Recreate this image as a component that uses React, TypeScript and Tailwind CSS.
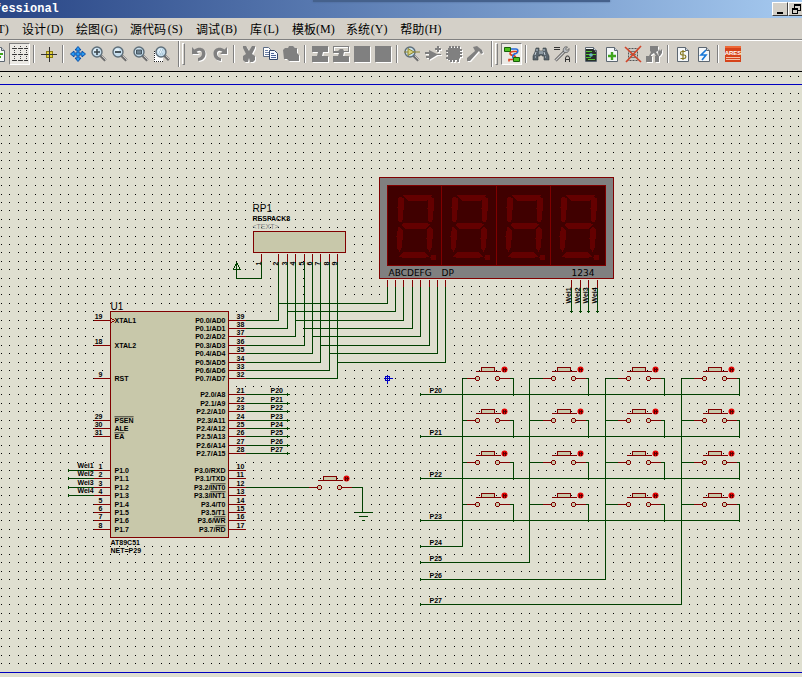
import type { ReactNode } from "react";

const PITCH = 8.4;
const ORIGIN = { x: 387, y: 378 };
const WIRE = "#004000";
const PART = "#800000";
const BODY = "#c8c8aa";

const gridX = (k: number) => ORIGIN.x + Math.trunc(k * PITCH);
const gridY = (k: number) => ORIGIN.y + Math.trunc(k * PITCH);

const menus = [
  { name: "工具", key: "T" },
  { name: "设计", key: "D" },
  { name: "绘图", key: "G" },
  { name: "源代码", key: "S" },
  { name: "调试", key: "B" },
  { name: "库", key: "L" },
  { name: "模板", key: "M" },
  { name: "系统", key: "Y" },
  { name: "帮助", key: "H" },
];

/* ---------- toolbar icons ---------- */

function Icon({ children }: { children: ReactNode }) {
  return (
    <svg viewBox="0 0 16 16" className="h-4 w-4 shrink-0 overflow-visible" aria-hidden="true">
      {children}
    </svg>
  );
}

// disabled Win32 look: white copy shifted by one pixel under the gray one
function Disabled({ children }: { children: ReactNode }) {
  return (
    <Icon>
      <g transform="translate(1 1)" fill="#fff">{children}</g>
      <g fill="#808080">{children}</g>
    </Icon>
  );
}

function Lens({ children, x = 6 }: { children?: ReactNode; x?: number }) {
  return (
    <g>
      <path d={x === 6 ? "M9.5 9.5l5 5" : "M10.5 9.5l4.5 4.5"} stroke="#6c6c6c" strokeWidth="3" />
      <path d={x === 6 ? "M10.5 9.5l4.5 4.5" : "M11.5 9.5l4 4"} stroke="#c8c8c8" strokeWidth="1" />
      <circle cx={x} cy="6" r="5" fill="#c4dcec" stroke="#5d6d78" strokeWidth="1.4" />
      <circle cx={x - 1} cy="5" r="2.5" fill="#e2f0f8" />
      {children}
    </g>
  );
}

function Page({ children }: { children?: ReactNode }) {
  return (
    <g>
      <path d="M2.5 1.5h8l3 3v11h-11z" fill="#f4f7f9" stroke="#5c6670" />
      <path d="M10.5 1.5v3h3" fill="#cfd6dc" stroke="#5c6670" />
      {children}
    </g>
  );
}

const GridIcon = () => (
  <Icon>
    <path
      d="M0 2.5h16M0 8.5h16M0 14.5h16M2.5 0v16M8.500 0v16M14.5 0v16"
      stroke="#444" strokeDasharray="1 1" shapeRendering="crispEdges"
    />
    <path d="M1 2.500h3M7 2.500h3M13 2.500h3M1 8.500h3M7 8.500h3M13 8.500h3M1 14.500h3M7 14.500h3M13 14.500h3" stroke="#333" shapeRendering="crispEdges" />
  </Icon>
);

const OriginIcon = () => (
  <Icon>
    <path d="M0 8.5h16M8.5 1v15" stroke="#333" shapeRendering="crispEdges" />
    <path d="M5 5h7v7H5z" fill="#8b7d10" shapeRendering="crispEdges" />
    <path d="M6 6h2v2H6zM9 6h2v2H9zM6 9h2v2H6zM9 9h2v2H9z" fill="#e0d040" shapeRendering="crispEdges" />
    <path d="M8.500 5v7M5 8.500h7" stroke="#333" shapeRendering="crispEdges" />
  </Icon>
);

const PanIcon = () => (
  <Icon>
    <path
      d="M8 .5l3 3.5H9v3h3V5l3.5 3-3.5 3V9H9v3h2l-3 3.5L5 12h2V9H4v2L.5 8 4 5v2h3V4H5z"
      fill="#2a9af0" stroke="#0b4fa8" strokeWidth="1"
    />
  </Icon>
);

const ZoomInIcon = () => <Icon><Lens><path d="M3 6h6M6 3v6" stroke="#38444c" strokeWidth="1.6" /></Lens></Icon>;
const ZoomOutIcon = () => <Icon><Lens><path d="M3 6h6" stroke="#38444c" strokeWidth="1.8" /></Lens></Icon>;
const ZoomAllIcon = () => <Icon><Lens><path d="M3.5 4h5v4h-5z" fill="#6e8290" stroke="#44545e" /></Lens></Icon>;
const ZoomAreaIcon = () => (
  <Icon>
    <path d="M0 6h9v10H0z" fill="#fff" />
    <path d="M.5 5v10.5h9" fill="none" stroke="#222" strokeDasharray="1 1" shapeRendering="crispEdges" />
    <Lens x={7}><path d="M6 4h3M5 6h4M6 8h3" stroke="#8fb4c8" strokeDasharray="1 1" /></Lens>
  </Icon>
);

const UndoIcon = () => (
  <Disabled><path d="M1 1v7h7L5.600 5.800C8 4 11 4.300 11 7.500c0 2.600-1.600 3.900-4 4.500v3c4.500-.3 7.500-3 7.500-7.500C14.500 2 8 0 3.500 3.600z" /></Disabled>
);
const RedoIcon = () => (
  <Disabled><path d="M15 1v7H8l2.400-2.200C8 4 5 4.300 5 7.500c0 2.600 1.600 3.900 4 4.500v3C4.500 14.700 1.500 12 1.500 7.500 1.500 2 8 0 12.500 3.600z" /></Disabled>
);
const CutIcon = () => (
  <Disabled>
    <path d="M2 0h3l3 5 3-5h3v2l-3 6 3 2v4l-2 2h-3l-1-4-1 4H4l-2-2v-4l3-2-3-6z" />
  </Disabled>
);
const CopyIcon = () => (
  <Icon>
    <path d="M1.500 1.500h5l2 2v7h-7z" fill="#fff" stroke="#5b6b84" />
    <path d="M3 4.500h3M3 6.500h4M3 8.500h4" stroke="#6a7fa6" />
    <path d="M7.500 4.500h5l3 3v6h-8z" fill="#f4f8ff" stroke="#33466a" />
    <path d="M9 7.500h3M9 9.500h5M9 11.500h5" stroke="#4a6296" />
  </Icon>
);
const PasteIcon = () => (
  <Disabled><path d="M0 4l2-2h3l1-2h4l2 2h2v5l2 2v6H6l-2-2H1z" /></Disabled>
);
const BlockCopyIcon = () => (
  <Disabled><path d="M0 0h16v6h-5l-1 4h6v6H0v-6h5l1-4H0z" /></Disabled>
);
const BlockMoveIcon = () => (
  <Disabled><path d="M0 0h16v6h-5l-1 4h6v6H0v-6h5l1-3H0zM1 1v4h4l2-2h3l1 2h4V1z" fillRule="evenodd" /></Disabled>
);
const SquareIcon = () => <Disabled><path d="M0 0h16v16H0z" /></Disabled>;

const PickIcon = () => (
  <Icon>
    <Lens><path d="M4 2.500L10 6 4 9.500z" fill="#d8d27a" stroke="#8c8430" /></Lens>
    <path d="M0 6h4M10 6h6" stroke="#8c8430" />
  </Icon>
);
const MakeIcon = () => (
  <Disabled>
    <path d="M4 4l9 4.500-9 5.500v-2H1v-2h3V8H0V6h4zM12 0h2v2h2v2h-2v2h-2V4h-2V2h2zM12 8h4v1h-4z" />
  </Disabled>
);
const PackageIcon = () => (
  <Disabled>
    <path d="M2 2h1V0h2v2h1V0h2v2h1V0h2v2h1V0h2v3h2v2h-2v1h2v2h-2v1h2v2h-2v1l-1 1v3h-2v-2H9v2H7v-2H6v2H4v-2H2v-1H0v-2h2V9H0V7h2V6H0V4h2z" />
  </Disabled>
);
const HammerIcon = () => (
  <Disabled><path d="M6 1l4-1 5 4 1 3-2 1-2-3-1 1-8 9H0v-3l8-7z" /></Disabled>
);

const RouteIcon = () => (
  <Icon>
    <path d="M13 7V5.500H9.500C5 5.500 5 9 9 9.500c4 .5 3 4 0 4H5v2" fill="none" stroke="#e0401c" strokeWidth="1.600" />
    <path d="M7 3h5c2.500 0 2.500 4 0 4.500C8 8 8 12 10 13" fill="none" stroke="#2468d8" strokeWidth="1.500" />
    <path d="M.5 1.500h6v4h-6z" fill="#4fc020" stroke="#186008" />
    <path d="M9.500 11.500h6v4h-6z" fill="#4fc020" stroke="#186008" />
  </Icon>
);
const FindIcon = () => (
  <Icon>
    <path d="M3 2h3v3h4V2h3l1 4 2 4v4h-5v-4H9v-1H7v1H5v4H0v-4l2-4z" fill="#59646c" stroke="#333c42" strokeWidth=".6" />
    <path d="M2 9l1-3M12 9l-1-3M2 11h1M12 11h1M4 3v2M11 3v2" stroke="#c4d0d8" />
    <path d="M7 5v3M9 5v3" stroke="#c4d0d8" />
  </Icon>
);
const PropertyIcon = () => (
  <Icon>
    <path d="M0 1.500h6M0 3.500h6" stroke="#333" shapeRendering="crispEdges" />
    <path d="M1.500 14.500l9-9" stroke="#555" strokeWidth="3" />
    <path d="M1.500 14.500l9-9" stroke="#d0d0d0" strokeWidth="1.200" />
    <path d="M15 2.500l-2 2-1.500-1.500 2-2c-3-1-5 1.500-4 5 3 1.500 6 0 5.500-3.500z" fill="#b8bcc0" stroke="#555" strokeWidth=".8" />
    <path d="M11.500 16v-4l1-2h2l1 2v4M11.500 13.500h4" fill="none" stroke="#333" />
  </Icon>
);
const NetlistIcon = () => (
  <Icon>
    <Page>
      <path d="M3 3h7l3 3v9H3z" fill="#27302c" />
      <path d="M3 5.500h6M3 8.500h4M9 8.500h4M3 11.500h5M5 13.500h7" stroke="#55c832" />
      <circle cx="8" cy="9" r="1.800" fill="#6cb8c8" />
    </Page>
  </Icon>
);
const NewSheetIcon = () => (
  <Icon><Page><path d="M8 6v8M4 10h8" stroke="#3fa51e" strokeWidth="2.400" /></Page></Icon>
);
const RemoveSheetIcon = () => (
  <Icon>
    <path d="M3.500 2.500h9v12h-9z" fill="#c9c9c4" stroke="#555" strokeDasharray="2 1" />
    <path d="M5 5.500h6M5 8.500h6M5 11.500h6" stroke="#777" />
    <path d="M0 1l16 15M16 0L1 16" stroke="#d2452a" strokeWidth="1.700" />
  </Icon>
);
const ZoomSheetIcon = () => (
  <Disabled>
    <path d="M4 0h8v5l-2 1 2 3 1 1v6H9v-6h1L8 7 5 9v1h1v6H0v-6h3l2-4-1-1zM13 3l1 2 2-2v4l-2 3h-1l-1-4z" />
  </Disabled>
);
const BillIcon = () => (
  <Icon>
    <Page />
    <path d="M10.500 5.500H7C5 5.500 5 9 7 9h2c2.500 0 2.500 3.500 0 3.500H5.500M8 4v10" fill="none" stroke="#857820" strokeWidth="1.200" />
  </Icon>
);
const ErcIcon = () => (
  <Icon><Page><path d="M10 4L5 9h5l-4 5" fill="none" stroke="#1577d8" strokeWidth="1.600" /></Page></Icon>
);
const AresIcon = () => (
  <Icon>
    <path d="M0 0h16v16H0z" fill="#d6431a" />
    <path d="M0 0h16v2H0z" fill="#ee6a38" />
    <text x="8" y="9" textAnchor="middle" fontSize="6" fontWeight="700" fill="#fff" fontFamily="'Liberation Sans', sans-serif">ARES</text>
    <path d="M1 11.500h14M1 13.500h14" stroke="#f5c0a8" shapeRendering="crispEdges" />
  </Icon>
);

type Tool = { label: string; icon?: ReactNode; pressed?: boolean };

const groups: { wide?: boolean; tools: Tool[] }[] = [
  {
    tools: [
      { label: "刷新", icon: <Icon><Page><path d="M5 8h7M5 11h5" stroke="#3fa51e" strokeWidth="2" /></Page></Icon> },
      { label: "网格", icon: <GridIcon />, pressed: true },
    ],
  },
  { tools: [{ label: "原点", icon: <OriginIcon /> }] },
  {
    tools: [
      { label: "平移", icon: <PanIcon /> },
      { label: "放大", icon: <ZoomInIcon /> },
      { label: "缩小", icon: <ZoomOutIcon /> },
      { label: "显示全部", icon: <ZoomAllIcon /> },
      { label: "区域缩放", icon: <ZoomAreaIcon /> },
    ],
  },
  { wide: true, tools: [{ label: "撤销", icon: <UndoIcon /> }, { label: "重做", icon: <RedoIcon /> }] },
  {
    tools: [
      { label: "剪切", icon: <CutIcon /> },
      { label: "复制", icon: <CopyIcon /> },
      { label: "粘贴", icon: <PasteIcon /> },
    ],
  },
  {
    tools: [
      { label: "块复制", icon: <BlockCopyIcon /> },
      { label: "块移动", icon: <BlockMoveIcon /> },
      { label: "块旋转", icon: <SquareIcon /> },
      { label: "块删除", icon: <SquareIcon /> },
    ],
  },
  {
    tools: [
      { label: "拾取元件", icon: <PickIcon /> },
      { label: "制作元件", icon: <MakeIcon /> },
      { label: "封装工具", icon: <PackageIcon /> },
      { label: "分解", icon: <HammerIcon /> },
    ],
  },
  { wide: true, tools: [{ label: "自动连线", icon: <RouteIcon />, pressed: true }] },
  { tools: [{ label: "查找", icon: <FindIcon /> }, { label: "属性分配", icon: <PropertyIcon /> }] },
  {
    tools: [
      { label: "设计浏览器", icon: <NetlistIcon /> },
      { label: "新建图纸", icon: <NewSheetIcon /> },
      { label: "删除图纸", icon: <RemoveSheetIcon /> },
      { label: "转到图纸", icon: <ZoomSheetIcon /> },
    ],
  },
  { tools: [{ label: "元件清单", icon: <BillIcon /> }, { label: "电气检查", icon: <ErcIcon /> }] },
  { tools: [{ label: "ARES", icon: <AresIcon /> }] },
];

function Separator({ wide }: { wide?: boolean }) {
  if (wide) {
    return (
      <div className="flex h-full w-4 shrink-0 items-center pl-1.5">
        <div className="h-full w-0.5 border-r border-r-white bg-[#808080]" />
        <div className="ml-0.5 h-[22px] w-[3px] border border-t-white border-r-[#808080] border-b-[#808080] border-l-white" />
      </div>
    );
  }
  return (
    <div className="flex w-2 shrink-0 justify-center">
      <div className="h-[18px] w-0.5 border-r border-r-white bg-[#808080]" />
    </div>
  );
}

function Toolbar() {
  return (
    <div className="-ml-3 flex h-[30px] items-center pb-1">
      {groups.map((group, i) => (
        <div key={i} className="flex h-full shrink-0 items-center">
          {i > 0 && <Separator wide={group.wide} />}
          {group.tools.map((tool) => (
            <button
              key={tool.label}
              type="button"
              aria-label={tool.label}
              className={
                tool.pressed
                  ? "flex h-[22px] w-[21px] items-center justify-center border border-t-[#808080] border-r-white border-b-white border-l-[#808080] bg-[#ebe9e4]"
                  : "flex h-[22px] w-[21px] items-center justify-center"
              }
            >
              {tool.icon}
            </button>
          ))}
        </div>
      ))}
    </div>
  );
}

function TitleBar() {
  return (
    <header className="relative flex h-[18px] items-center justify-between bg-linear-to-r from-[#2a4686] to-[#a6caf0]">
      <h1 className="-ml-1.5 font-['Liberation_Mono',monospace] text-xs leading-[18px] font-bold text-white">fessional</h1>
      <div className="absolute top-0 left-[39%] h-0.5 w-[37%] bg-[#45618c] shadow-[0_0_2px_#45618c]" />
      <div className="-mr-0.5 flex">
        {["最小化", "还原"].map((label, i) => (
          <button
            key={label}
            type="button"
            aria-label={label}
            className="flex h-3.5 w-4 items-center justify-center border border-t-white border-r-[#404040] border-b-[#404040] border-l-white bg-[#d4d0c8]"
          >
            <svg viewBox="0 0 10 10" className="h-2.5 w-2.5" shapeRendering="crispEdges">
              {i === 0 ? (
                <path d="M2 8h6v2H2z" />
              ) : (
                <path d="M3 0h7v7H7v3H1V4h2zM4 2v2h3v2h2V2zM2 6v3h4V6z" fillRule="evenodd" />
              )}
            </svg>
          </button>
        ))}
      </div>
    </header>
  );
}

function MenuBar() {
  return (
    <nav className="-ml-8 flex h-[21px] items-center gap-3 font-['Noto_Sans_CJK_SC',sans-serif] text-xs text-black">
      {menus.map((menu) => (
        <button key={menu.name} type="button" className="flex shrink-0 items-center leading-4">
          {menu.name}
          <span className="w-[18px] text-center font-['Liberation_Serif',serif]">({menu.key})</span>
        </button>
      ))}
    </nav>
  );
}

/* ---------- schematic ---------- */

const dots = Array.from({ length: 72 }, (_, r) =>
  Array.from({ length: 96 }, (_, c) => `M${gridX(c - 46) - 0.5} ${gridY(r - 36)}h1`).join("")
).join("");

// short cross stroke at a loose wire end
const tick = (x: number, y: number) => `M${x} ${y - 1.5}v3`;

function Label({ x, y, children, end, up }: { x: number; y: number; children: ReactNode; end?: boolean; up?: boolean }) {
  return (
    <text x={x} y={y} fontWeight="700" textAnchor={end ? "end" : "start"} transform={up ? `rotate(-90 ${x} ${y})` : undefined}>
      {children}
    </text>
  );
}

function Bar({ children }: { children: string }) {
  return <tspan className="overline">{children}</tspan>;
}

const leftPins: { y: number; num: string; name: ReactNode }[] = [
  { y: 320, num: "19", name: "XTAL1" },
  { y: 345, num: "18", name: "XTAL2" },
  { y: 378, num: "9", name: "RST" },
  { y: 420, num: "29", name: <Bar>PSEN</Bar> },
  { y: 428, num: "30", name: "ALE" },
  { y: 436, num: "31", name: <Bar>EA</Bar> },
  ...[470, 478, 487, 495, 504, 512, 520, 529].map((y, i) => ({ y, num: `${i + 1}`, name: `P1.${i}` })),
];

const p0 = [320, 328, 336, 345, 353, 362, 370, 378];
const p2 = [394, 403, 411, 420, 428, 436, 445, 453];
const p3 = [470, 478, 487, 495, 504, 512, 520, 529];
const p3Names: ReactNode[] = [
  "RXD", "TXD", <Bar>INT0</Bar>, <Bar>INT1</Bar>, "T0", "T1", <Bar>WR</Bar>, <Bar>RD</Bar>,
];

const rightPins: { y: number; num: number; name: ReactNode }[] = [
  ...p0.map((y, i) => ({ y, num: 39 - i, name: `P0.${i}/AD${i}` })),
  ...p2.map((y, i) => ({ y, num: 21 + i, name: `P2.${i}/A${8 + i}` })),
  ...p3.map((y, i) => ({ y, num: 10 + i, name: <>P3.{i}/{p3Names[i]}</> })),
];

function Mcu() {
  return (
    <g>
      <rect x="110" y="311" width="118" height="226" fill={BODY} stroke={PART} />
      <path d="M111 318l3 2l-3 2" fill="none" stroke={PART} />
      <text x="110" y="309" fontSize="10">U1</text>
      {leftPins.map((pin) => (
        <g key={pin.num}>
          <path d={`M93 ${pin.y}H110`} stroke={PART} />
          <Label x={102} y={pin.y - 2} end>{pin.num}</Label>
          <Label x={114} y={pin.y + 2}>{pin.name}</Label>
        </g>
      ))}
      {rightPins.map((pin) => (
        <g key={pin.num}>
          <path d={`M228 ${pin.y}H245`} stroke={PART} />
          <Label x={236} y={pin.y - 2}>{pin.num}</Label>
          <Label x={225} y={pin.y + 2} end>{pin.name}</Label>
        </g>
      ))}
      <Label x={110} y={544}>AT89C51</Label>
      <Label x={110} y={552}>NET=P29</Label>
    </g>
  );
}

const packPins = [278, 287, 295, 304, 312, 320, 329, 337];
const segPins = [387, 395, 403, 412, 420, 429, 437, 445];
const segRows = [303, 311, 320, 328, 336, 345, 353, 362];

function ResistorPack() {
  return (
    <g>
      <text x="252" y="211" fontSize="10">RP1</text>
      <Label x={252} y={220}>RESPACK8</Label>
      <text x="252" y="228" fill="#808080">&lt;TEXT&gt;</text>
      <rect x="253" y="231" width="92" height="21" fill={BODY} stroke={PART} />
      {[261, ...packPins].map((x, i) => (
        <g key={x}>
          <path d={`M${x} 253V261`} stroke={PART} />
          <Label x={x - 1} y={265} up>{i + 1}</Label>
        </g>
      ))}
      <path d="M261 261V278H236V262M236 262L233 269H240Z" fill="none" stroke={WIRE} />
    </g>
  );
}

function Digit({ x }: { x: number }) {
  return (
    <g transform={`translate(${x} 0)`} fill="#640000">
      <path d="M17 194h25l2 1-4 5H20l-5-5z" />
      <path d="M13 196l3 2v11l-1 11-2 2-3-2v-13l1-10z" />
      <path d="M43 196l3 2v12l-1 10-2 2-3-2v-12l1-10z" />
      <path d="M14 224l3-2h22l3 2-4 4H17z" />
      <path d="M11 226l4 3v10l-1 9-2 3-3-3v-12z" />
      <path d="M42 226l3 3v9l-1 10-2 3-3-3v-10l1-10z" />
      <path d="M16 251h20l5 5-3 1H14l-2-1z" />
      <circle cx="46" cy="257" r="3" />
    </g>
  );
}

function Display() {
  return (
    <g>
      <rect x="379" y="177" width="234" height="101" fill="#808080" stroke={PART} />
      <rect x="387" y="185" width="218" height="80" fill="#400000" stroke={PART} />
      {[387, 441, 496, 550].map((x) => (
        <Digit key={x} x={x} />
      ))}
      <path d="M441 185V265M496 185V265M550 185V265" stroke={PART} />
      <g fontSize="9" fontFamily="'DejaVu Sans', sans-serif">
        <text x="388" y="275">ABCDEFG</text>
        <text x="441" y="275">DP</text>
        <text x="571" y="275">1234</text>
      </g>
      {segPins.map((x) => (
        <path key={x} d={`M${x} 279V286`} stroke={PART} />
      ))}
      {[571, 580, 588, 597].map((x, i) => (
        <g key={x}>
          <path d={`M${x} 279V287`} stroke={PART} />
          <path d={`M${x} 287V312M${x - 1.5} 311h3`} stroke={WIRE} />
          <Label x={x - 1} y={303} up>{`Wei${i + 1}`}</Label>
        </g>
      ))}
    </g>
  );
}

function PushButton({ x, y }: { x: number; y: number }) {
  return (
    <g transform={`translate(${x} ${y})`}>
      <path d="M-11 0H-3M22 0H32M-2 -7H23" stroke={PART} />
      <rect x="4" y="-11" width="13" height="4" fill={BODY} stroke={PART} />
      <g fill={BODY} stroke={PART}>
        <path d="M-1 -2H1L2 -1V1L1 2H-1L-2 1V-1Z" />
        <path d="M19 -2H21L22 -1V1L21 2H19L18 1V-1Z" />
      </g>
      <circle cx="27" cy="-9" r="3" fill="#e60000" stroke="none" shapeRendering="auto" />
      <path d="M26 -11V-7M28 -11V-7M25 -9H29" stroke="#600000" />
    </g>
  );
}

const keyRows = [
  { y: 378, net: 394 },
  { y: 420, net: 436 },
  { y: 462, net: 478 },
  { y: 504, net: 520 },
];
const keyCols = [
  { line: 462, key: 477, drop: 513, net: 546 },
  { line: 529, key: 553, drop: 588, net: 562 },
  { line: 605, key: 628, drop: 664, net: 579 },
  { line: 681, key: 704, drop: 739, net: 604 },
];

function Keypad() {
  return (
    <g>
      {keyRows.map((row, i) => (
        <g key={row.y}>
          <path d={`M419 ${row.net}H739${tick(420, row.net)}`} stroke={WIRE} />
          <Label x={429} y={row.net - 2}>{`P2${i}`}</Label>
        </g>
      ))}
      {keyCols.map((col, i) => (
        <g key={col.line}>
          <path d={`M419 ${col.net}H${col.line}V378${tick(420, col.net)}`} fill="none" stroke={WIRE} />
          <Label x={429} y={col.net - 2}>{`P2${i + 4}`}</Label>
          {keyRows.map((row) => (
            <g key={row.y}>
              <path d={`M${col.line} ${row.y}H${col.key - 11}M${col.key + 31} ${row.y}H${col.drop}V${row.net + 1}`} fill="none" stroke={WIRE} />
              <PushButton x={col.key} y={row.y} />
            </g>
          ))}
        </g>
      ))}
    </g>
  );
}

function Wires() {
  return (
    <g fill="none" stroke={WIRE}>
      {packPins.map((x, i) => (
        <g key={x}>
          <path d={`M${x} 261V${p0[i]}H245`} />
          <path d={`M${segPins[i]} 286V${segRows[i]}H${x - 1}`} />
        </g>
      ))}
      {p2.map((y) => (
        <path key={y} d={`M245 ${y}H289${tick(287, y)}`} />
      ))}
      {[470, 478, 487, 495].map((y) => (
        <path key={y} d={`M67 ${y}H93${tick(68, y)}`} />
      ))}
      <path d="M245 487H308M350 487H362V512M354 512H372M358 516H367M361 520H364" />
    </g>
  );
}

function Schematic() {
  return (
    <svg
      viewBox="-0.5 71.5 802 605"
      className="block w-full font-['Liberation_Sans',sans-serif]"
      fontSize="7"
      shapeRendering="crispEdges"
      role="img"
      aria-label="AT89C51"
    >
      <path d={dots} stroke="#000" />
      <path d="M-1 84H802M-1 672H802" stroke="#0000c0" />
      <Wires />
      <Mcu />
      <ResistorPack />
      <Display />
      <Keypad />
      <PushButton x={319} y={487} />
      {p2.map((y, i) => (
        <Label key={y} x={270} y={y - 2}>{`P2${i}`}</Label>
      ))}
      {[470, 478, 487, 495].map((y, i) => (
        <Label key={y} x={77} y={y - 3}>{`Wei${i + 1}`}</Label>
      ))}
      <path d="M383 378H392M387 374V383M385 376H389V380H385Z" fill="none" stroke="#0000c0" />
    </svg>
  );
}

export default function App() {
  return (
    <div className="min-h-screen w-full overflow-hidden bg-[#dfdfd0]">
      <TitleBar />
      <div className="bg-[#d4d0c8]">
        <MenuBar />
        <div className="h-0.5 border-b border-b-white bg-[#808080]" />
        <Toolbar />
      </div>
      <main className="border-t border-black">
        <Schematic />
      </main>
    </div>
  );
}
